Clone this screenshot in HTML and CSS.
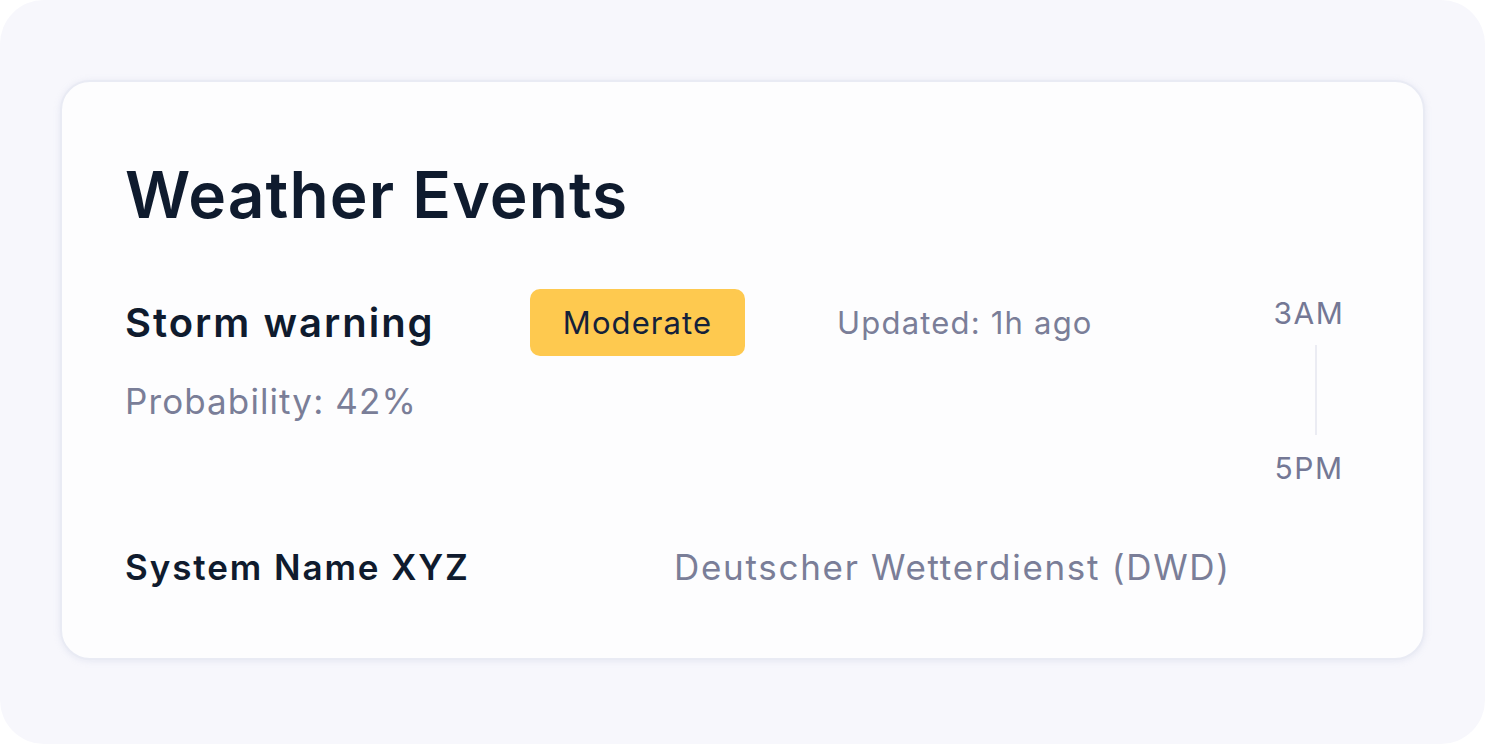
FILE: index.html
```html
<!DOCTYPE html>
<html lang="en">
<head>
<meta charset="utf-8">
<title>Weather Events</title>
<link rel="stylesheet" href="styles.css">
</head>
<body>
<div class="frame">
  <section class="card">
    <h1 class="title">Weather Events</h1>
    <div class="event">
      <div class="event-main">
        <div class="event-name">Storm warning</div>
        <div class="event-prob">Probability: 42%</div>
      </div>
      <div class="event-badge-col">
        <span class="badge">Moderate</span>
      </div>
      <div class="event-updated">Updated: 1h ago</div>
      <div class="timeline">
        <span class="time">3AM</span>
        <span class="time-line"></span>
        <span class="time">5PM</span>
      </div>
    </div>
    <div class="source">
      <div class="source-name">System Name XYZ</div>
      <div class="source-value">Deutscher Wetterdienst (DWD)</div>
    </div>
  </section>
</div>
</body>
</html>
```

FILE: styles.css
```css
html, body {
  margin: 0;
  padding: 0;
  background: #ffffff;
}

body {
  font-family: "Inter", "Noto Sans", sans-serif;
  width: 1485px;
  height: 744px;
  overflow: hidden;
}

.frame {
  box-sizing: border-box;
  width: 1485px;
  height: 744px;
  background: #f7f7fc;
  border-radius: 44px;
  padding: 80px 60px 84px 60px;
}

.card {
  box-sizing: border-box;
  height: 580px;
  background: #fdfdfe;
  border: 2px solid #e9ebf4;
  border-radius: 30px;
  box-shadow: 0 1px 6px rgba(180, 186, 214, 0.25);
  padding: 74px 78px 0 63px;
}

.title {
  margin: 0;
  font-size: 64px;
  line-height: 77px;
  font-weight: 600;
  color: #0f1b2e;
  letter-spacing: 1.1px;
}

.event {
  display: grid;
  grid-template-columns: 405px 307px 1fr auto;
  align-items: start;
  margin-top: 56px;
}

.event-main {
  padding-top: 10px;
}

.event-name {
  font-size: 40px;
  line-height: 48px;
  font-weight: 600;
  color: #0f1b2e;
  letter-spacing: 2px;
}

.event-prob {
  margin-top: 33px;
  font-size: 35px;
  line-height: 42px;
  color: #7a7e98;
  letter-spacing: 1.1px;
}

.badge {
  display: inline-flex;
  align-items: center;
  justify-content: center;
  box-sizing: border-box;
  width: 215px;
  height: 67px;
  background: #fec94f;
  border-radius: 10px;
  font-size: 31px;
  letter-spacing: 1.1px;
  color: #14213a;
}

.event-updated {
  padding-top: 14px;
  font-size: 31px;
  line-height: 40px;
  color: #7a7e98;
  letter-spacing: 1.2px;
}

.timeline {
  display: flex;
  flex-direction: column;
  align-items: center;
  width: 72px;
  padding-top: 6px;
}

.time {
  font-size: 30px;
  line-height: 36px;
  color: #747895;
  letter-spacing: 1.5px;
}

.time-line {
  display: block;
  width: 2px;
  height: 90px;
  margin: 14px 0 15px 14px;
  background: #ebecf3;
}

.source {
  display: grid;
  grid-template-columns: 549px 1fr;
  margin-top: 60px;
  align-items: baseline;
}

.source-name {
  font-size: 35px;
  line-height: 42px;
  font-weight: 600;
  color: #0f1b2e;
  letter-spacing: 1.9px;
}

.source-value {
  font-size: 35px;
  line-height: 42px;
  color: #7a7e98;
  letter-spacing: 1.7px;
}
```
